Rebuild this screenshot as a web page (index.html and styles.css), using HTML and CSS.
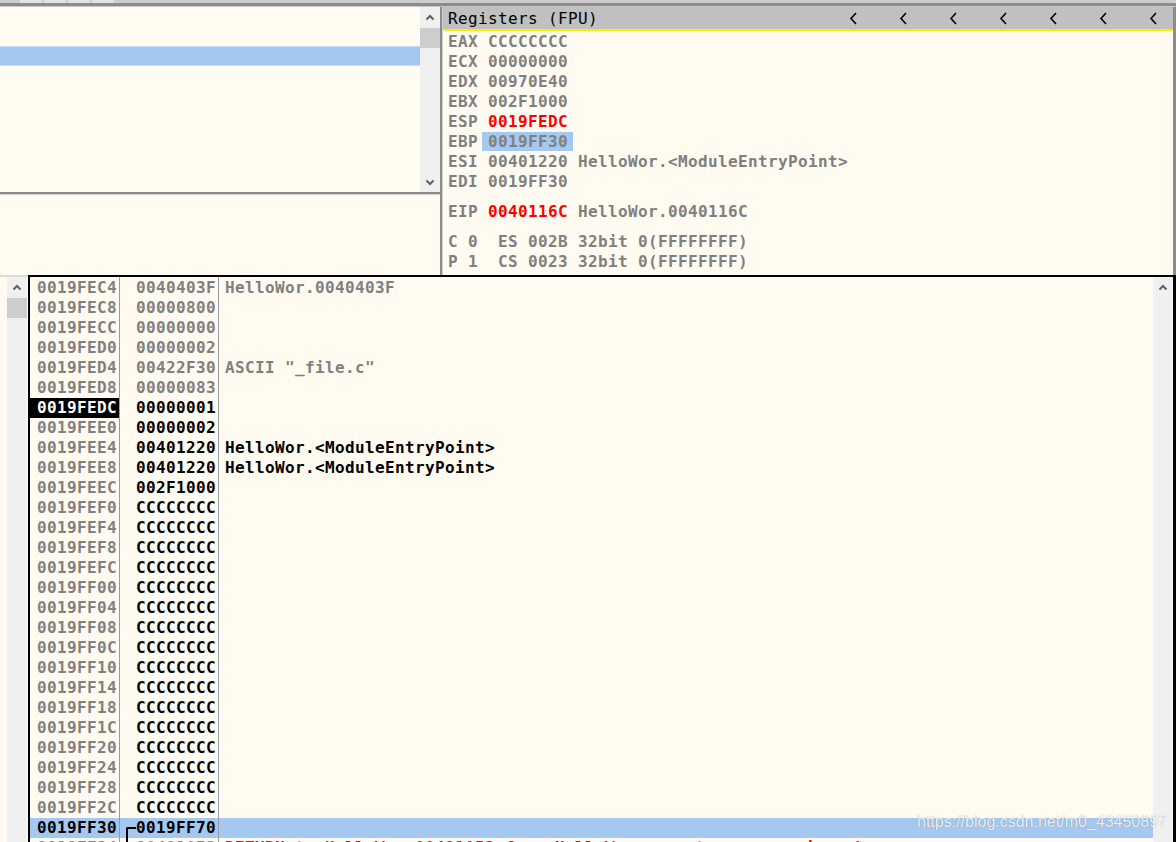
FILE: index.html
```html
<!DOCTYPE html>
<html>
<head>
<meta charset="utf-8">
<link rel="stylesheet" href="styles.css">
</head>
<body>
<div class="app">
  <div class="tabstrip"><span class="tab"></span><span class="tab"></span><span class="tab"></span><span class="tab"></span></div>
  <div class="top">
    <div class="leftpane">
      <div class="list">
        <div class="list-body"><div class="list-row sel"></div></div>
        <div class="vscroll">
          <div class="sb-btn"><svg width="10" height="7" viewBox="0 0 10 7"><polyline points="1.5,5.5 5,2 8.5,5.5" fill="none" stroke="#606060" stroke-width="2"/></svg></div>
          <div class="sb-thumb"></div>
          <div class="sb-fill"></div>
          <div class="sb-btn"><svg width="10" height="7" viewBox="0 0 10 7"><polyline points="1.5,1.5 5,5 8.5,1.5" fill="none" stroke="#606060" stroke-width="2"/></svg></div>
        </div>
      </div>
      <div class="hsplit"></div>
      <div class="lower"></div>
    </div>
    <div class="vsplit"></div>
    <div class="regs">
      <div class="regs-head">
        <span class="title">Registers (FPU)</span>
        <span class="chevs">
          <svg width="9" height="13" viewBox="0 0 9 13"><polyline points="7,1 2,6.5 7,12" fill="none" stroke="#000" stroke-width="1.6"/></svg>
          <svg width="9" height="13" viewBox="0 0 9 13"><polyline points="7,1 2,6.5 7,12" fill="none" stroke="#000" stroke-width="1.6"/></svg>
          <svg width="9" height="13" viewBox="0 0 9 13"><polyline points="7,1 2,6.5 7,12" fill="none" stroke="#000" stroke-width="1.6"/></svg>
          <svg width="9" height="13" viewBox="0 0 9 13"><polyline points="7,1 2,6.5 7,12" fill="none" stroke="#000" stroke-width="1.6"/></svg>
          <svg width="9" height="13" viewBox="0 0 9 13"><polyline points="7,1 2,6.5 7,12" fill="none" stroke="#000" stroke-width="1.6"/></svg>
          <svg width="9" height="13" viewBox="0 0 9 13"><polyline points="7,1 2,6.5 7,12" fill="none" stroke="#000" stroke-width="1.6"/></svg>
          <svg width="9" height="13" viewBox="0 0 9 13"><polyline points="7,1 2,6.5 7,12" fill="none" stroke="#000" stroke-width="1.6"/></svg>
        </span>
      </div>
      <div class="regs-body">
        <div class="reg">EAX CCCCCCCC</div>
        <div class="reg">ECX 00000000</div>
        <div class="reg">EDX 00970E40</div>
        <div class="reg">EBX 002F1000</div>
        <div class="reg">ESP <span class="red">0019FEDC</span></div>
        <div class="reg">EBP <span class="hl">0019FF30</span></div>
        <div class="reg">ESI 00401220 HelloWor.&lt;ModuleEntryPoint&gt;</div>
        <div class="reg">EDI 0019FF30</div>
        <div class="gap"></div>
        <div class="reg">EIP <span class="red">0040116C</span> HelloWor.0040116C</div>
        <div class="gap"></div>
        <div class="reg">C 0  ES 002B 32bit 0(FFFFFFFF)</div>
        <div class="reg">P 1  CS 0023 32bit 0(FFFFFFFF)</div>
      </div>
    </div>
  </div>
  <div class="bottom">
    <div class="lscroll">
      <div class="vscroll">
        <div class="sb-btn"><svg width="10" height="7" viewBox="0 0 10 7"><polyline points="1.5,5.5 5,2 8.5,5.5" fill="none" stroke="#606060" stroke-width="2"/></svg></div>
        <div class="sb-thumb"></div>
        <div class="sb-fill"></div>
      </div>
    </div>
    <div class="stack">
      <div class="rows">
        <div class="row"><span class="addr">0019FEC4</span><span class="val">0040403F</span><span class="cmt">HelloWor.0040403F</span></div>
        <div class="row"><span class="addr">0019FEC8</span><span class="val">00000800</span><span class="cmt"></span></div>
        <div class="row"><span class="addr">0019FECC</span><span class="val">00000000</span><span class="cmt"></span></div>
        <div class="row"><span class="addr">0019FED0</span><span class="val">00000002</span><span class="cmt"></span></div>
        <div class="row"><span class="addr">0019FED4</span><span class="val">00422F30</span><span class="cmt">ASCII "_file.c"</span></div>
        <div class="row"><span class="addr">0019FED8</span><span class="val">00000083</span><span class="cmt"></span></div>
        <div class="row"><span class="addr cur">0019FEDC</span><span class="val k">00000001</span><span class="cmt"></span></div>
        <div class="row"><span class="addr">0019FEE0</span><span class="val k">00000002</span><span class="cmt"></span></div>
        <div class="row"><span class="addr">0019FEE4</span><span class="val k">00401220</span><span class="cmt k">HelloWor.&lt;ModuleEntryPoint&gt;</span></div>
        <div class="row"><span class="addr">0019FEE8</span><span class="val k">00401220</span><span class="cmt k">HelloWor.&lt;ModuleEntryPoint&gt;</span></div>
        <div class="row"><span class="addr">0019FEEC</span><span class="val k">002F1000</span><span class="cmt"></span></div>
        <div class="row"><span class="addr">0019FEF0</span><span class="val k">CCCCCCCC</span><span class="cmt"></span></div>
        <div class="row"><span class="addr">0019FEF4</span><span class="val k">CCCCCCCC</span><span class="cmt"></span></div>
        <div class="row"><span class="addr">0019FEF8</span><span class="val k">CCCCCCCC</span><span class="cmt"></span></div>
        <div class="row"><span class="addr">0019FEFC</span><span class="val k">CCCCCCCC</span><span class="cmt"></span></div>
        <div class="row"><span class="addr">0019FF00</span><span class="val k">CCCCCCCC</span><span class="cmt"></span></div>
        <div class="row"><span class="addr">0019FF04</span><span class="val k">CCCCCCCC</span><span class="cmt"></span></div>
        <div class="row"><span class="addr">0019FF08</span><span class="val k">CCCCCCCC</span><span class="cmt"></span></div>
        <div class="row"><span class="addr">0019FF0C</span><span class="val k">CCCCCCCC</span><span class="cmt"></span></div>
        <div class="row"><span class="addr">0019FF10</span><span class="val k">CCCCCCCC</span><span class="cmt"></span></div>
        <div class="row"><span class="addr">0019FF14</span><span class="val k">CCCCCCCC</span><span class="cmt"></span></div>
        <div class="row"><span class="addr">0019FF18</span><span class="val k">CCCCCCCC</span><span class="cmt"></span></div>
        <div class="row"><span class="addr">0019FF1C</span><span class="val k">CCCCCCCC</span><span class="cmt"></span></div>
        <div class="row"><span class="addr">0019FF20</span><span class="val k">CCCCCCCC</span><span class="cmt"></span></div>
        <div class="row"><span class="addr">0019FF24</span><span class="val k">CCCCCCCC</span><span class="cmt"></span></div>
        <div class="row"><span class="addr">0019FF28</span><span class="val k">CCCCCCCC</span><span class="cmt"></span></div>
        <div class="row"><span class="addr">0019FF2C</span><span class="val k">CCCCCCCC</span><span class="cmt"></span></div>
        <div class="row blue"><span class="addr">0019FF30</span><span class="val k bstart">0019FF70</span><span class="cmt"></span></div>
        <div class="row"><span class="addr">0019FF34</span><span class="val bmid">00401A53</span><span class="cmt red">RETURN to HelloWor.00401A53 from HelloWor.__scrt_common_main_seh</span></div>
      </div>
      <div class="vscroll">
        <div class="sb-btn"><svg width="10" height="7" viewBox="0 0 10 7"><polyline points="1.5,5.5 5,2 8.5,5.5" fill="none" stroke="#606060" stroke-width="2"/></svg></div>
        <div class="sb-fill"></div>
      </div>
    </div>
    <div class="wm">https://blog.csdn.net/m0_43450897</div>
  </div>
</div>
</body>
</html>
```

FILE: styles.css
```css
* { box-sizing: border-box; margin: 0; padding: 0; }
html, body { width: 1176px; height: 842px; overflow: hidden; background: #fffbf0; }
body { font-family: "DejaVu Sans Mono", monospace; font-size: 16px; letter-spacing: 0.37px; }

.app { display: flex; flex-direction: column; height: 842px; }

.tabstrip {
  height: 7px; flex: none; display: flex; gap: 2px; padding-left: 20px;
  background: linear-gradient(#cdcdcd 0 3px, #8c8c8c 3px 6px, #c8c8c8 6px);
}
.tab { width: 22px; height: 3px; background: #e4e4e4; }

.top { height: 268px; flex: none; display: flex; }
.leftpane { width: 440px; flex: none; display: flex; flex-direction: column; }
.list { height: 185px; flex: none; display: flex; }
.list-body { flex: 1; padding-top: 39px; }
.list-row { height: 20px; }
.list-row.sel { background: #a4c8f0; border-top: 1px solid #c4dbf5; border-bottom: 1px solid #c4dbf5; }

.vscroll { width: 20px; flex: none; background: #f0f0f0; display: flex; flex-direction: column; }
.sb-btn { height: 20px; flex: none; display: flex; align-items: center; justify-content: center; }
.sb-thumb { height: 20px; flex: none; background: #cdcdcd; margin-top: 1px; }
.sb-fill { flex: 1; }

.hsplit { height: 3px; flex: none; background: #8c8c8c; border-bottom: 1px solid #cfcfcf; }
.lower { flex: 1; }

.vsplit { width: 3px; flex: none; background: #8c8c8c; border-right: 1px solid #d0d0d0; }

.regs { flex: 1; display: flex; flex-direction: column; border-right: 3px solid #8c8c8c; overflow: hidden; }
.regs-head {
  height: 24px; flex: none; background: #c0c0c0; border-bottom: 2px solid #f2f200;
  display: flex; align-items: center; padding-left: 5px; padding-right: 15px; color: #000;
}
.chevs { margin-left: auto; display: flex; gap: 41px; }
.chevs svg { display: block; }
.regs-body { flex: none; height: 241px; padding: 1px 0 0 5px; font-weight: bold; color: #808080; overflow: hidden; }
.reg { height: 20px; line-height: 20px; white-space: pre; }
.gap { height: 10px; }
.red { color: #ff0000; }
.hl { display: inline-block; height: 19px; line-height: 19px; background: #a4c8f0; margin-left: -6px; padding: 0 5px 0 6px; }

.bottom { flex: 1; display: flex; position: relative; }
.lscroll { width: 28px; flex: none; padding-left: 7px; padding-right: 1px; border-top: 2px solid #dcdcdc; display: flex; }
.stack { flex: 1; display: flex; border-top: 2px solid #000; border-left: 2px solid #000; border-right: 3px solid #000; overflow: hidden; }
.rows { flex: 1; padding-top: 1px; font-weight: bold; color: #808080; overflow: hidden;
  background: linear-gradient(90deg, transparent 89px, #9a9a9a 89px 90px, transparent 90px 188px, #9a9a9a 188px 189px, transparent 189px) top / 100% 1px no-repeat; }
.row { display: flex; height: 20px; line-height: 20px; white-space: pre; }
.addr { width: 90px; flex: none; padding-left: 7px; border-right: 1px solid #9a9a9a; }
.val { width: 99px; flex: none; padding-left: 16px; border-right: 1px solid #9a9a9a; position: relative; }
.cmt { flex: 1; padding-left: 6px; }
.k { color: #000; }
.addr.cur { background: #000; color: #fff; }
.row.blue { background: #a4c8f0; }
.row.blue .addr { color: #000; }
.cmt.red { color: #ff0000; }
.val.bstart::before {
  content: ""; position: absolute; left: 6px; top: 9px; bottom: 0; width: 8px;
  border-left: 2px solid #000; border-top: 2px solid #000; border-top-left-radius: 2px;
}
.val.bmid::before { content: ""; position: absolute; left: 6px; top: 0; bottom: 0; border-left: 2px solid #000; }

.wm {
  position: absolute; left: 917px; top: 538px;
  font-family: "Liberation Sans", Arial, sans-serif; font-size: 16px; line-height: 18px; letter-spacing: 0;
  color: rgba(255, 255, 255, 0.88); text-shadow: 0 0 1px rgba(0, 0, 0, 0.35);
}
```
